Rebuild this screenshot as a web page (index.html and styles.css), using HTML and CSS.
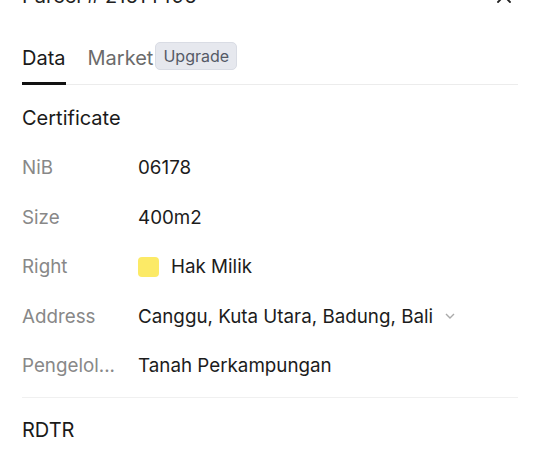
FILE: index.html
```html
<!doctype html>
<html>
<head>
<meta charset="utf-8">
<title>Parcel</title>
<link rel="stylesheet" href="styles.css">
</head>
<body>
<div class="panel">
	<div class="head">
		<div class="title">Parcel # 21614496</div>
		<svg class="close" width="16" height="16" viewBox="0 0 16 16"><path d="M2 2L14 14M14 2L2 14" stroke="#222" stroke-width="1.8" stroke-linecap="round"/></svg>
	</div>
	<div class="tabs">
		<div class="tab on">Data</div>
		<div class="tab">Market <span class="badge">Upgrade</span></div>
	</div>
	<div class="section">
		<div class="sec-title">Certificate</div>
		<div class="row"><div class="lbl">NiB</div><div class="val">06178</div></div>
		<div class="row"><div class="lbl">Size</div><div class="val">400m2</div></div>
		<div class="row"><div class="lbl">Right</div><div class="val"><span class="swatch"></span>Hak Milik</div></div>
		<div class="row"><div class="lbl">Address</div><div class="val">Canggu, Kuta Utara, Badung, Bali
			<svg class="chev" width="10" height="6" viewBox="0 0 10 6"><path d="M1 1L5 5L9 1" fill="none" stroke="#aaa" stroke-width="1.4"/></svg></div></div>
		<div class="row"><div class="lbl">Pengelol...</div><div class="val">Tanah Perkampungan</div></div>
	</div>
	<div class="section">
		<div class="sec-title">RDTR</div>
		<div class="row"><div class="lbl">Zone</div><div class="val">Perumahan Kepadatan Sedang</div></div>
	</div>
</div>
</body>
</html>
```

FILE: styles.css
```css
*{margin:0;padding:0;box-sizing:border-box;}
html,body{overflow:hidden;background:#fff;}
body{font-family:Inter,"Noto Sans",sans-serif;color:#1c1c1c;}
.panel{padding:0 22px;margin-top:-16px;}
.head{display:flex;justify-content:space-between;align-items:center;height:24px;}
.title{font-size:20px;line-height:24px;color:#222;}
.close{margin-right:6px;}
.tabs{display:flex;gap:22px;margin-top:35px;border-bottom:1px solid #ececec;height:42px;}
.tab{font-size:20px;line-height:28px;color:#6b6b6b;display:flex;align-items:flex-start;padding-top:1px;height:42px;}
.tab.on{color:#1a1a1a;border-bottom:3px solid #111;margin-bottom:-1px;}
.badge{font-size:16px;line-height:26px;color:#555a66;background:#e6e8ee;border:1px solid #d9dce4;border-radius:5px;padding:0 7px;margin-left:2px;margin-top:-2px;}
.section{border-bottom:1px solid #f0f0f0;padding:21px 0 6px;}
.section + .section{padding-top:20px;}
.sec-title{font-size:20px;line-height:24px;color:#1a1a1a;margin-bottom:13px;}
.row{display:flex;align-items:center;height:49.5px;font-size:18.8px;}
.lbl{width:116px;color:#888;}
.val{display:flex;align-items:center;color:#1c1c1c;}
.swatch{width:21px;height:20px;background:#fcea66;border-radius:4px;margin-right:12px;}
.chev{margin-left:12px;}
```
